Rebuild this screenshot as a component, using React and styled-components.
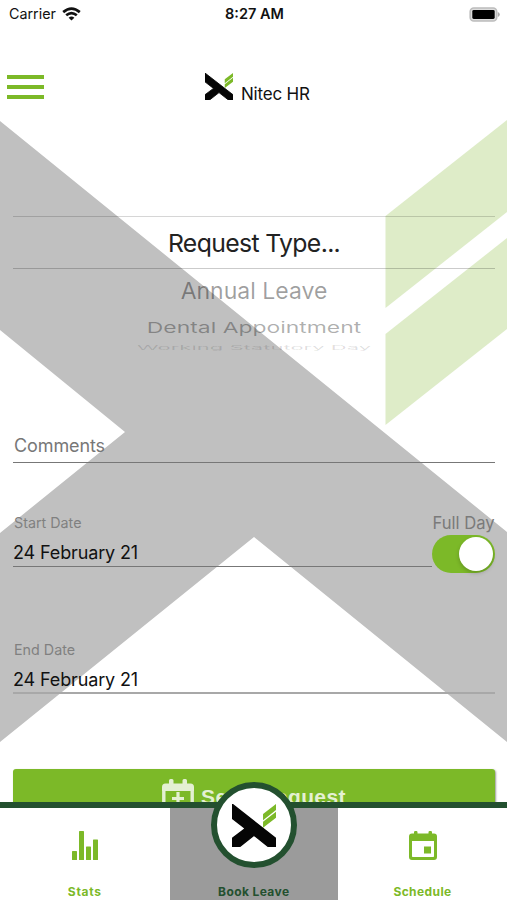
import React from 'react';
import styled, { createGlobalStyle } from 'styled-components';

const GREEN = '#7cb928';
const DARK_GREEN = '#23502f';

const GlobalStyle = createGlobalStyle`
  * {
    box-sizing: border-box;
  }

  body {
    background: #fff;
    font-family: Inter, 'Liberation Sans', sans-serif;
    margin: 0;
  }
`;

const Screen = styled.div`
  display: flex;
  flex-direction: column;
  height: 900px;
  isolation: isolate;
  overflow: hidden;
  position: relative;
  width: 507px;
`;

const Watermark = styled.svg`
  height: 900px;
  left: 0;
  position: absolute;
  top: 0;
  width: 507px;
  z-index: -1;
`;

const Text = styled.span`
  color: ${props => props.$color || '#111'};
  font-size: ${props => props.$size}px;
  font-weight: ${props => props.$weight || 400};
  letter-spacing: ${props => props.$spacing || 0}px;
  line-height: 1.2;
  white-space: nowrap;
`;

const StatusBar = styled.div`
  align-items: center;
  display: grid;
  grid-template-columns: 1fr auto 1fr;
  height: 28px;
  padding: 0 7px 0 9px;
`;

const Carrier = styled.div`
  align-items: center;
  display: flex;
  gap: 6px;
`;

const StyledBattery = styled.svg`
  justify-self: end;
`;

const Header = styled.header`
  align-items: center;
  display: grid;
  grid-template-columns: 198px auto 1fr;
  height: 118px;
  padding: 2px 7px 0;
`;

const MenuButton = styled.button`
  background: none;
  border: 0;
  display: flex;
  flex-direction: column;
  gap: 6px;
  height: 26px;
  padding: 0;
  width: 37px;
`;

const MenuLine = styled.span`
  background: ${GREEN};
  height: 4px;
  width: 100%;
`;

const Brand = styled.div`
  align-items: flex-end;
  display: flex;
  gap: 8px;
  height: 32px;
`;

const BrandLogo = styled.div`
  height: 32px;
  padding-top: 1px;
`;

const Form = styled.main`
  display: flex;
  flex-direction: column;
  padding: 0 12px 0 13px;
`;

const Picker = styled.div`
  display: flex;
  flex-direction: column;
  height: 214px;
  padding-top: 70px;
`;

const PickerRow = styled.div`
  align-items: center;
  display: flex;
  height: ${props => props.$height}px;
  justify-content: center;
`;

const SelectedRow = styled(PickerRow)`
  border-bottom: 1px solid rgba(0, 0, 0, .2);
  border-top: 1px solid rgba(0, 0, 0, .16);
  padding-top: 2px;
`;

const PickerText = styled(Text)`
  transform: scaleY(${props => props.$squash || 1});
`;

const Field = styled.div`
  border-bottom: ${props => props.$line || '1px solid #777'};
  display: flex;
  flex: 1;
  flex-direction: column;
  height: ${props => props.$height}px;
  justify-content: space-between;
  padding: ${props => props.$padding || '0 0 2px'};
`;

const CommentsRow = styled.div`
  align-items: flex-end;
  display: flex;
  height: 103px;
`;

const DateRow = styled.div`
  align-items: flex-end;
  display: flex;
  height: ${props => props.$height}px;
`;

const DateLabel = styled(Text)`
  padding-left: 1px;
`;

const FullDay = styled.div`
  align-items: center;
  display: flex;
  flex-direction: column;
  height: 60px;
  margin-bottom: -7px;
  width: 63px;
`;

const Toggle = styled.div`
  background: ${GREEN};
  border-radius: 19px;
  display: flex;
  flex: none;
  height: 38px;
  justify-content: flex-end;
  margin-top: 1px;
  padding: 2px;
  width: 63px;
`;

const Knob = styled.div`
  background: #fff;
  border-radius: 50%;
  box-shadow: 0 2px 4px rgba(0, 0, 0, .2);
  height: 34px;
  width: 34px;
`;

const SendButton = styled.button`
  align-items: center;
  background: ${GREEN};
  border: 0;
  border-radius: 3px;
  box-shadow: 1px 1px 2px rgba(0, 0, 0, .4);
  display: flex;
  gap: 7px;
  height: 56px;
  justify-content: center;
  margin-top: 75px;
  padding: 0;
`;

const TabBar = styled.nav`
  background: #fff;
  border-top: 6px solid ${DARK_GREEN};
  bottom: 0;
  display: grid;
  grid-template-columns: 169.5px 168.5px 169px;
  height: 98px;
  left: 0;
  position: absolute;
  right: 0;
`;

const Tab = styled.div`
  align-items: center;
  background: ${props => (props.$active ? '#9b9b9b' : 'transparent')};
  display: flex;
  flex-direction: column;
  justify-content: space-between;
  padding: 23px 0 0;
  position: relative;
`;

const TabBadge = styled.div`
  align-items: center;
  background: #fff;
  border: 6px solid ${DARK_GREEN};
  border-radius: 50%;
  display: flex;
  height: 86px;
  justify-content: center;
  left: 41px;
  position: absolute;
  top: -26px;
  width: 86px;
`;

const TabLabel = styled(Text)`
  height: 15px;
  margin-top: auto;
`;

function Logo({ width, height }) {
  return (
    <svg width={width} height={height} viewBox="0 0 129 128" preserveAspectRatio="none" display="block">
      <path d="M0 0L129 103V128H108L64.5 93L21 128H0V103L39 73L0 42Z" fill="#050505" stroke="#050505" strokeWidth="4" />
      <path d="M91 30L129 0V18L91 48ZM91 53L129 23V41L91 71Z" fill={GREEN} />
    </svg>
  );
}

function WifiIcon() {
  return (
    <svg width="19" height="14" viewBox="0 0 19 14" fill="none" stroke="#111" strokeWidth="2.7">
      <path d="M1.2 5.1Q9.5 -2 17.8 5.1" />
      <path d="M4.2 8.3Q9.5 3.9 14.8 8.3" />
      <path d="M6.6 10.7Q9.5 8.4 12.4 10.7L9.5 13.6Z" fill="#111" stroke="none" />
    </svg>
  );
}

function BatteryIcon() {
  return (
    <StyledBattery width="31" height="15" viewBox="0 0 31 15">
      <rect x="1.2" y="1" width="26.5" height="13" rx="3.6" fill="#ddd" stroke="#bcbcbc" strokeWidth="1.6" />
      <rect x="3.3" y="3" width="22.4" height="9" rx="1.4" />
      <path d="M28.8 5Q30.8 5.7 30.8 7.5Q30.8 9.3 28.8 10Z" fill="#aaa" />
    </StyledBattery>
  );
}

function CalendarPlusIcon() {
  return (
    <svg width="32" height="36" viewBox="0 0 32 36" fill="none" stroke="#e4f0d3">
      <path d="M1.8 10V31Q1.8 34 4.8 34H27.2Q30.2 34 30.2 31V10" strokeWidth="3.4" />
      <path d="M0 12V8Q0 4.5 3.5 4.5H7V1.5Q7 0 8.5 0H10Q11.5 0 11.5 1.5V4.5H20.5V1.5Q20.5 0 22 0H23.5Q25 0 25 1.5V4.5H28.5Q32 4.5 32 8V12Z" fill="#e4f0d3" stroke="none" />
      <path d="M16 13V27M10 19.5H22" strokeWidth="3.2" />
    </svg>
  );
}

function StatsIcon() {
  return (
    <svg width="26" height="29" viewBox="0 0 26 29" fill={GREEN}>
      <rect x="0" y="20" width="5" height="9" rx=".6" />
      <rect x="7" y="0" width="5" height="29" rx=".6" />
      <rect x="14" y="15.5" width="5" height="13.5" rx=".6" />
      <rect x="21" y="8.5" width="5" height="20.5" rx=".6" />
    </svg>
  );
}

function ScheduleIcon() {
  return (
    <svg width="28" height="29" viewBox="0 0 28 29" fill={GREEN}>
      <path fillRule="evenodd" d="M3 2.5H5V1.2Q5 0 6.2 0H7.3Q8.5 0 8.5 1.2V2.5H19.5V1.2Q19.5 0 20.7 0H21.8Q23 0 23 1.2V2.5H25Q28 2.5 28 5.5V26Q28 29 25 29H3Q0 29 0 26V5.5Q0 2.5 3 2.5ZM3 10V25.3Q3 26 3.7 26H24.3Q25 26 25 25.3V10Z" />
      <rect x="15" y="15.5" width="7" height="7" />
    </svg>
  );
}

function App() {
  return (
    <Screen>
      <GlobalStyle />
      <Watermark viewBox="0 0 507 900">
        <path d="M0 121L507 532V742L254 537L0 742V533L125 432L0 330Z" fill="#c0c0c0" />
        <path d="M385.5 216L507 120V212L385.5 308ZM385.5 334L507 238V329L385.5 425Z" fill="#deecc8" />
      </Watermark>

      <StatusBar>
        <Carrier>
          <Text $size={14.3}>Carrier</Text>
          <WifiIcon />
        </Carrier>
        <Text $size={14.5} $weight={600}>8:27 AM</Text>
        <BatteryIcon />
      </StatusBar>

      <Header>
        <MenuButton aria-label="Menu">
          <MenuLine />
          <MenuLine />
          <MenuLine />
        </MenuButton>
        <Brand>
          <BrandLogo>
            <Logo width={28} height={27} />
          </BrandLogo>
          <Text $size={17} $spacing={-0.2}>Nitec HR</Text>
        </Brand>
      </Header>

      <Form>
        <Picker>
          <SelectedRow $height={53}>
            <PickerText $size={24.8} $spacing={-0.65} $color="#222">Request Type...</PickerText>
          </SelectedRow>
          <PickerRow $height={45}>
            <PickerText $size={23} $color="rgba(0, 0, 0, .38)" $squash={0.97}>Annual Leave</PickerText>
          </PickerRow>
          <PickerRow $height={30}>
            <PickerText $size={22.9} $color="rgba(0, 0, 0, .31)" $squash={0.65}>Dental Appointment</PickerText>
          </PickerRow>
          <PickerRow $height={9}>
            <PickerText $size={22} $color="rgba(0, 0, 0, .13)" $squash={0.25}>Working Statutory Day</PickerText>
          </PickerRow>
        </Picker>

        <CommentsRow>
          <Field $height={28} $padding="0 1px">
            <Text $size={18} $spacing={-0.1} $color="#777">Comments</Text>
          </Field>
        </CommentsRow>

        <DateRow $height={104}>
          <Field $height={53}>
            <DateLabel $size={14.3} $color="#808080">Start Date</DateLabel>
            <Text $size={18} $spacing={-0.13}>24 February 21</Text>
          </Field>
          <FullDay>
            <Text $size={16.6} $color="#7a7a7a">Full Day</Text>
            <Toggle>
              <Knob />
            </Toggle>
          </FullDay>
        </DateRow>

        <DateRow $height={127}>
          <Field $height={53} $padding="0 0 1px" $line="2px solid #a8a8a8">
            <DateLabel $size={14.3} $color="#808080">End Date</DateLabel>
            <Text $size={18} $spacing={-0.13}>24 February 21</Text>
          </Field>
        </DateRow>

        <SendButton>
          <CalendarPlusIcon />
          <Text $size={21} $weight={600} $spacing={0.4} $color="#e4f0d3">Send Request</Text>
        </SendButton>
      </Form>

      <TabBar>
        <Tab>
          <StatsIcon />
          <TabLabel $size={12} $weight={700} $spacing={0.7} $color={GREEN}>Stats</TabLabel>
        </Tab>
        <Tab $active>
          <TabBadge>
            <Logo width={44} height={43} />
          </TabBadge>
          <TabLabel $size={12} $weight={700} $spacing={0.4} $color={DARK_GREEN}>Book Leave</TabLabel>
        </Tab>
        <Tab>
          <ScheduleIcon />
          <TabLabel $size={12} $weight={700} $spacing={0.4} $color={GREEN}>Schedule</TabLabel>
        </Tab>
      </TabBar>
    </Screen>
  );
}

export default App;
